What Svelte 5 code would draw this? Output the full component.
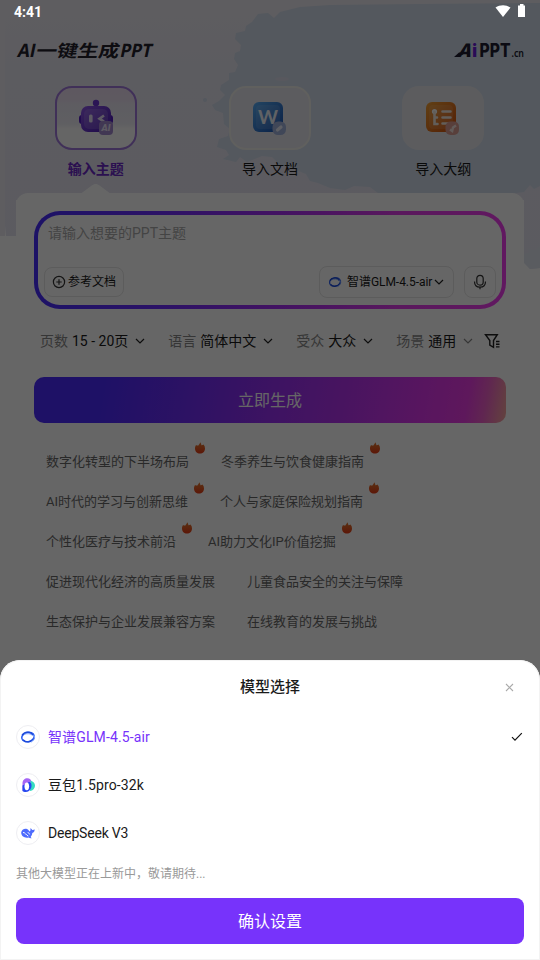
<script>
    const tabs = [
        { id: "topic", label: "输入主题" },
        { id: "doc", label: "导入文档" },
        { id: "outline", label: "导入大纲" },
    ];
    const filters = [
        { name: "页数", value: "15 - 20页" },
        { name: "语言", value: "简体中文" },
        { name: "受众", value: "大众" },
        { name: "场景", value: "通用", faded: true },
    ];
    const topics = [
        [{ text: "数字化转型的下半场布局", hot: true }, { text: "冬季养生与饮食健康指南", hot: true }],
        [{ text: "AI时代的学习与创新思维", hot: true }, { text: "个人与家庭保险规划指南", hot: true }],
        [{ text: "个性化医疗与技术前沿", hot: true }, { text: "AI助力文化IP价值挖掘", hot: true }],
        [{ text: "促进现代化经济的高质量发展" }, { text: "儿童食品安全的关注与保障" }],
        [{ text: "生态保护与企业发展兼容方案" }, { text: "在线教育的发展与挑战" }],
    ];
    const models = [
        { id: "glm", name: "智谱GLM-4.5-air" },
        { id: "doubao", name: "豆包1.5pro-32k" },
        { id: "deepseek", name: "DeepSeek V3" },
    ];
    let activeTab = $state("topic");
    let selected = $state("glm");
    let current = $derived(models.find((m) => m.id === selected));
</script>

{#snippet chevron(faded)}
    <svg class="chevron" class:faded width="10" height="8" viewBox="0 0 10 8">
        <path d="M1 2l4 4 4-4" />
    </svg>
{/snippet}

{#snippet modelIcon(id, size)}
    <svg width={size} height={size} viewBox="0 0 16 16" fill="none">
        {#if id === "glm"}
            <ellipse cx="8" cy="8" rx="6.300" ry="4.700" transform="rotate(-15 8 8)" stroke="#2f62f5" stroke-width="1.500" />
            <path d="M2 6.500C4.500 2.600 10.500 2 12.800 6.200M14.200 9C11.500 13.600 6 14 3 10.800" stroke="#1d49d8" stroke-width="1.400" />
            <path d="M4 5.500C7 4.200 11 4.500 12.700 6.500" stroke="#6f9cff" stroke-width=".8" />
            <path d="M14.400 6.500c.8 3-1 5.500-3.500 6.700" stroke="#7aa2ff" stroke-width="1" />
        {:else if id === "doubao"}
            <path d="M2.500 13.500V6.300C2.500 3.200 4.700 1.200 7.300 1.200c2.500 0 4 1.500 4.200 4L7 6.500 5 14.300z" fill="#a566f5" />
            <path d="M10.600 3.400C13.300 4.400 15 6.300 15 8.700c0 2.600-2.100 4.800-5 5.400z" fill="#35dcc0" />
            <path d="M2.500 8.500v5.500c1.500 1.500 4.700 1.400 6.500 0 2.500-1.900 3.200-5.200 2-7.900-.7-1.300-1.900-1.500-2.700-.7" fill="#2747f0" />
            <ellipse cx="6.800" cy="9.300" rx="2.300" ry="3.900" fill="#fff" />
        {:else}
            <path d="M1.200 7.600C1.500 4.500 4.500 3.200 7 4c1.300.5 1.700 1.400 2.600 2.400 1-.3 1-1.900.7-3.200 1 .3 1.500.9 2 1.700.8.200 1.600-.1 2.300-.6.200 2.200-.8 3.300-2.300 3.700-.2 1.700-.7 2.900-1.700 3.900l1.100 1.300c-1.500.3-2.300-.3-3.100-.6-4.200.9-7.500-1.500-7.400-5z" fill="#4d6bfe" />
            <path d="M3 7.500c2-.3 3.200 2.800 5.300 3.600M7.700 7.600c1 .1 1.700.8 1.900 1.800" stroke="#fff" stroke-width="1" />
        {/if}
    </svg>
{/snippet}

{#snippet tabIcon(id)}
    <svg width="82" height="64" viewBox="0 0 82 64">
        <defs>
            <linearGradient id="g-{id}" x1="0" y1="0" x2="1" y2="1">
                {#if id === "topic"}
                    <stop offset="0" stop-color="#8f57e8" /><stop offset="1" stop-color="#4a1bb5" />
                {:else if id === "doc"}
                    <stop offset="0" stop-color="#58adf5" /><stop offset="1" stop-color="#174fae" />
                {:else}
                    <stop offset="0" stop-color="#f2a035" /><stop offset="1" stop-color="#d34e0c" />
                {/if}
            </linearGradient>
        </defs>
        {#if id === "topic"}
            <rect x="24" y="29" width="34" height="9" rx="3" fill="#561fc4" />
            <path d="M41 17v4" stroke="#6c35d5" stroke-width="2.500" />
            <circle cx="41" cy="17" r="3.200" fill="#6c35d5" />
            <rect x="26" y="20" width="30" height="26" rx="7" fill="url(#g-topic)" />
            <rect x="29" y="23" width="24" height="20" rx="5" fill="#fff" opacity=".13" />
            <rect x="34" y="28.500" width="3.600" height="8" rx="1.500" fill="#e9e2f7" />
            <path d="M49 29.500l-4.500 3.200 4.500 3" fill="none" stroke="#e9e2f7" stroke-width="2.600" />
            <rect x="44" y="35" width="14" height="14" rx="4" fill="#a48bd0" />
            <text x="46.500" y="45.300" class="badge-text" textLength="9" lengthAdjust="spacingAndGlyphs">AI</text>
        {:else if id === "doc"}
            <rect x="24" y="16" width="30" height="30" rx="6" fill="url(#g-doc)" />
            <rect x="27" y="19" width="24" height="24" rx="4" fill="#fff" opacity=".1" />
            <text x="29" y="37.500" class="word" textLength="20" lengthAdjust="spacingAndGlyphs">W</text>
            <rect x="43.500" y="35.500" width="13.500" height="13.500" rx="5.500" fill="#a0b2dc" />
            <path d="M48.500 44l3.500-3" stroke="#e8ecf8" stroke-width="3.200" stroke-linecap="round" />
        {:else}
            <rect x="24" y="16" width="30" height="30" rx="6" fill="url(#g-outline)" />
            <rect x="27" y="19" width="24" height="24" rx="4" fill="#fff" opacity=".1" />
            <circle cx="32.500" cy="25.500" r="2.600" fill="#fff" />
            <path d="M32.500 26v12H35.500M32.500 31.500H35M40.500 25.500h8M40.500 31.500h8M40.500 37.500h8" fill="none" stroke="#f6ece0" stroke-width="2.600" stroke-linecap="round" />
            <rect x="43.500" y="35.500" width="13.500" height="13.500" rx="5" fill="#dc9f95" />
            <path d="M48 43.500l2.200 1.500.8-3.500 3-2" fill="none" stroke="#f6e4de" stroke-width="2.400" />
        {/if}
    </svg>
{/snippet}

<div class="screen">
    <svg class="backdrop" width="540" height="280" viewBox="0 0 540 280">
        <defs>
            <linearGradient id="lav" x1="0" y1="0" x2="0" y2="1">
                <stop offset="0" stop-color="#ebe9f0" />
                <stop offset=".3" stop-color="#e6e5f1" />
                <stop offset="1" stop-color="#e4e3f1" />
            </linearGradient>
        </defs>
        <path d="M0 0H540V268L530 269 524 262V200H16V236H6L4 215 0 218z" fill="url(#lav)" />
        <path d="M0 0H5V236H0z" fill="#eae9f1" />
        <path d="M540 3L420 4 330 5 300 7 280 12 274 18 268 13 258 14 252 22 246 26 245 31 236 33 235 39 241 45 240 51 235 53 234 59 238 65 235 72 229 73 229 80 221 85 220 90 225 95 219 101 212 105 215 110 223 113 224 124 230 129 228 136 219 139 217 147 226 150 229 155 223 159 236 162 240 157 247 162 262 156 272 157 280 165 296 170 306 174 310 181 318 183 330 188 345 190 354 186 370 187 378 193H516L524 192 530 185 534 189 540 186z" fill="#d2dcea" />
        <circle cx="205" cy="100" r="2" fill="#d2dcea" />
        <ellipse cx="282" cy="79" rx="7" ry="2" fill="#dcddec" />
        <path d="M524 254l6-2-2-3 7 1 5-4v22l-10 1-6-6z" fill="#e2e6f0" />
    </svg>

    <main class="page">
        <header>
            <svg width="138" height="22" viewBox="0 0 138 22">
                <g class="title" transform="translate(4 0) skewX(-12)">
                    <text class="wide" x="0.500" y="18" textLength="18" lengthAdjust="spacingAndGlyphs">AI</text>
                    <text x="19" y="18" textLength="83" lengthAdjust="spacingAndGlyphs">一键生成</text>
                    <text class="wide" x="103" y="18" textLength="32" lengthAdjust="spacingAndGlyphs">PPT</text>
                </g>
            </svg>
            <svg width="72" height="22" viewBox="0 0 72 22">
                <path class="swoosh" d="M1 18l5-4.500h5l-1 2.200H7.500L5.500 18z" />
                <text class="logo" transform="translate(5.500 0) skewX(-18)" x="4" y="18" textLength="14" lengthAdjust="spacingAndGlyphs">A</text>
                <text class="logo violet" x="19" y="18">i</text>
                <text class="logo" x="26.500" y="18" textLength="31" lengthAdjust="spacingAndGlyphs">PPT</text>
                <text class="cn" x="58.500" y="18" textLength="12.500" lengthAdjust="spacingAndGlyphs">.cn</text>
            </svg>
        </header>

        <nav>
            {#each tabs as tab}
                <button class="tab" class:active={tab.id === activeTab} onclick={() => (activeTab = tab.id)}>
                    <span class="tile" class:plain={tab.id === "outline"}>{@render tabIcon(tab.id)}</span>
                    <span class="tab-label">{tab.label}</span>
                    <span class="pointer"></span>
                </button>
            {/each}
        </nav>

        <section class="panel">
            <div class="prompt">
                <div class="prompt-inner">
                    <p class="placeholder">请输入想要的PPT主题</p>
                    <div class="tools">
                        <button class="tool ref">
                            <svg width="14" height="14" viewBox="0 0 14 14" class="line">
                                <circle cx="7" cy="7" r="5.600" /><path d="M7 4.300v5.400M4.300 7h5.400" />
                            </svg>
                            <span>参考文档</span>
                        </button>
                        <button class="tool model">
                            {@render modelIcon(selected, 14)}
                            <span>{current.name}</span>
                            {@render chevron(false)}
                        </button>
                        <button class="tool mic" aria-label="mic">
                            <svg width="16" height="16" viewBox="0 0 16 16" class="line">
                                <rect x="4.800" y="1.300" width="6.400" height="9.800" rx="3.200" />
                                <path d="M2.500 7.500c0 3.600 2.400 5.700 5.500 5.700s5.500-2.100 5.500-5.700M8 13.200v2" />
                            </svg>
                        </button>
                    </div>
                </div>
            </div>

            <div class="filters">
                {#each filters as f}
                    <div class="filter">
                        <span class="name">{f.name}</span>
                        <span class="value">{f.value}</span>
                        {@render chevron(f.faded)}
                    </div>
                {/each}
                <svg class="line funnel" width="17" height="16" viewBox="0 0 17 16">
                    <path d="M1.500 1.700h11.800L9.500 7.500v6.800L5.800 12V7.500zM12 8.500h3.500M12 11.200h3.500M12 13.900h3.500" />
                </svg>
            </div>

            <button class="generate">立即生成</button>

            <div class="topics">
                {#each topics as row}
                    <div class="topic-row">
                        {#each row as t}
                            <span class="topic">
                                {t.text}
                                {#if t.hot}
                                    <svg class="fire" width="12" height="12" viewBox="0 0 12 12">
                                        <defs>
                                            <linearGradient id="flame" x1="0" y1="0" x2="0" y2="1">
                                                <stop offset="0" stop-color="#e07a30" /><stop offset="1" stop-color="#e63a14" />
                                            </linearGradient>
                                        </defs>
                                        <path d="M6.200.200C7 1.100 7.400 2.100 7.400 3.200 8.300 3.200 9 2.900 9.500 2.500c1 1.200 1.500 2.500 1.500 3.900C11 9.500 8.900 11.500 6 11.500S1 9.500 1 6.500C1 5.100 1.300 4 2.100 2.900c.6.500 1.300.7 2.300.500C5 2.600 5.900 1.500 6.200.200z" fill="url(#flame)" />
                                    </svg>
                                {/if}
                            </span>
                        {/each}
                    </div>
                {/each}
            </div>
        </section>
    </main>

    <div class="mask"></div>

    <div class="status">
        <span>4:41</span>
        <svg width="32" height="16" viewBox="0 0 32 16" fill="#fff">
            <path d="M.500 4.600C5 1.400 11.200 1.400 15.500 4.600L8 14z" />
            <path d="M25 1h3.500v1.500H30V14H23V2.500h2z" />
        </svg>
    </div>

    <div class="sheet">
        <div class="sheet-head">
            <h2>模型选择</h2>
            <svg class="close" width="9" height="9" viewBox="0 0 9 9"><path d="M1 1l7 7M8 1L1 8" /></svg>
        </div>
        {#each models as m}
            <button class="row" class:chosen={m.id === selected} onclick={() => (selected = m.id)}>
                <span class="avatar">{@render modelIcon(m.id, 16)}</span>
                <span class="model-name" class:latin={m.id === "deepseek"}>{m.name}</span>
                {#if m.id === selected}
                    <svg class="tick" width="14" height="10" viewBox="0 0 14 10"><path d="M2 5.200l3 3L11.800 1.200" /></svg>
                {/if}
            </button>
        {/each}
        <p class="note">其他大模型正在上新中，敬请期待...</p>
        <button class="confirm">确认设置</button>
    </div>
</div>

<style>
    :global(body) {
        margin: 0;
    }
    .screen {
        position: relative;
        width: 540px;
        height: 960px;
        overflow: hidden;
        background: #fff;
        font-family: Roboto, "Noto Sans CJK SC", sans-serif;
        font-size: 14px;
        color: #1a1a1a;
    }
    button {
        font: inherit;
        color: inherit;
        background: none;
        border: none;
        padding: 0;
        margin: 0;
    }
    p, h2 {
        margin: 0;
    }
    svg {
        display: block;
        flex: none;
    }
    .backdrop {
        position: absolute;
        top: 0;
        left: 0;
    }
    .page {
        position: relative;
        padding-top: 39px;
    }
    header {
        display: flex;
        justify-content: space-between;
        padding: 0 15px 0 16px;
        height: 22px;
    }
    .title {
        font-size: 17px;
        font-weight: 700;
        fill: #23212c;
    }
    .wide {
        font-family: "Open Sans", sans-serif;
        font-size: 18.500px;
    }
    .logo {
        font-family: Inter, sans-serif;
        font-size: 18.500px;
        font-weight: 800;
        fill: #201d30;
    }
    .violet {
        fill: #6a20d8;
    }
    .swoosh {
        fill: #201d30;
    }
    .cn {
        font-family: "Noto Sans", sans-serif;
        font-size: 10px;
        font-weight: 600;
        fill: #201d30;
    }
    nav {
        display: grid;
        grid-template-columns: repeat(3, 1fr);
        padding: 25px 10px 0;
        height: 107px;
    }
    .tab {
        display: flex;
        flex-direction: column;
        align-items: center;
    }
    .tile {
        box-sizing: border-box;
        display: flex;
        flex: none;
        align-items: center;
        justify-content: center;
        width: 82px;
        height: 64px;
        border: 2px solid #f0efec;
        border-radius: 17px;
        background: #e6e5ed;
    }
    .tile.plain {
        border-color: #e6e7ea;
        background: #e5e5ea;
    }
    .active .tile {
        border-color: #a078dc;
        background: linear-gradient(#ebdcf0 0, #eadff1 20%, #eae7f3 26%, #eeedf4 60%, #fdfcfd 68%);
    }
    .badge-text {
        font-size: 9px;
        font-weight: 800;
        font-style: italic;
        fill: #e9e2f7;
    }
    .word {
        font-family: Lato, sans-serif;
        font-size: 18px;
        font-weight: 700;
        fill: #f0f4fc;
    }
    .tab:first-child {
        margin-left: -1px;
        margin-right: 1px;
    }
    .tab-label {
        margin-top: 9px;
        height: 20px;
        line-height: 20px;
    }
    .active .tab-label {
        font-weight: 700;
        color: #6c28c8;
    }
    .pointer {
        margin-top: 5px;
        width: 28px;
        height: 9px;
        clip-path: polygon(0 100%, 36% 18%, 46% 0, 54% 0, 64% 18%, 100% 100%);
    }
    .active .pointer {
        background: #fff;
    }
    .panel {
        margin: 0 16px;
        padding: 18px 18px 0;
        height: 500px;
        border-radius: 12px;
        background: #fff;
    }
    .prompt {
        padding: 4px;
        height: 90px;
        border-radius: 26px;
        background: linear-gradient(90deg, #482dff, #6a2dff 25%, #a22ef5 50%, #e13de8 78%, #f23df0);
    }
    .prompt-inner {
        box-sizing: border-box;
        height: 90px;
        padding: 8px 6px 0;
        border-radius: 22px;
        background: #fff;
    }
    .placeholder {
        height: 20px;
        padding-left: 4px;
        line-height: 20px;
        color: #aaa;
    }
    .tools {
        display: flex;
        align-items: center;
        margin-top: 23px;
        height: 32px;
        font-size: 12px;
    }
    .tool {
        box-sizing: border-box;
        display: flex;
        align-items: center;
        height: 32px;
        border: 1px solid #e6e6e6;
        border-radius: 8px;
    }
    .ref {
        width: 80px;
        height: 30px;
        padding-left: 7px;
        gap: 2px;
    }
    .ref span {
        padding-bottom: 3px;
    }
    .model {
        width: 135px;
        margin-left: auto;
        padding-left: 8px;
    }
    .model span {
        margin: 0 2px 0 5px;
        padding-bottom: 4px;
        letter-spacing: -0.05px;
        white-space: nowrap;
    }
    .mic {
        width: 32px;
        margin-left: 10px;
        justify-content: center;
    }
    .line {
        fill: none;
        stroke: #333;
        stroke-width: 1.2;
    }
    .chevron {
        fill: none;
        stroke: #222;
        stroke-width: 1.2;
    }
    .chevron.faded {
        stroke: #888;
    }
    .filters {
        display: flex;
        align-items: center;
        margin-top: 22px;
        padding-left: 6px;
        height: 20px;
        line-height: 20px;
    }
    .filter {
        display: flex;
        align-items: center;
        gap: 4px;
        margin-right: 23px;
        white-space: nowrap;
    }
    .filter .chevron {
        margin-left: 3px;
    }
    .filter:nth-child(4) {
        margin-right: 11px;
    }
    .name {
        color: #888;
    }
    .funnel {
        stroke: #222;
        stroke-width: 1.4;
    }
    .generate {
        display: block;
        width: 472px;
        height: 46px;
        margin-top: 26px;
        padding-bottom: 2px;
        border-radius: 10px;
        background: linear-gradient(100deg, #4b2bff 0, #4b2bff 14%, #6e2dfa 32%, #9830f5 50%, #b634f0 66%, #dc36ee 82%, #eb3ce6 91%, #f05fca 95%, #f7a89a 100%);
        font-size: 16px;
        color: #fff;
    }
    .topics {
        display: grid;
        gap: 8px;
        margin-top: 23px;
    }
    .topic-row {
        display: flex;
        gap: 8px;
    }
    .topic {
        position: relative;
        padding: 0 12px;
        height: 32px;
        line-height: 32px;
        font-size: 13px;
        color: #686868;
        white-space: nowrap;
    }
    .fire {
        position: absolute;
        top: -4px;
        right: -5px;
    }
    .mask {
        position: absolute;
        inset: 0;
        background: rgba(0, 0, 0, 0.6);
    }
    .status {
        position: absolute;
        top: 0;
        left: 0;
        right: 0;
        display: flex;
        align-items: center;
        justify-content: space-between;
        height: 24px;
        padding: 0 13px 0 14px;
        font-weight: 700;
        color: #fff;
    }
    .status svg {
        margin-top: -2px;
    }
    .sheet {
        position: absolute;
        left: 0;
        right: 0;
        bottom: 0;
        box-sizing: border-box;
        height: 300px;
        padding: 0 16px;
        border-radius: 20px 20px 0 0;
        background: #fff;
        box-shadow: inset 0 0 0 1px #f3f3f3;
    }
    .sheet-head {
        display: flex;
        align-items: center;
        height: 53px;
    }
    h2 {
        flex: 1;
        padding: 0 0 2px 19px;
        font-size: 15px;
        font-weight: 500;
        text-align: center;
    }
    .close {
        margin: 2px 10px 0 0;
        fill: none;
        stroke: #aaa;
        stroke-width: 1.1;
    }
    .row {
        display: flex;
        align-items: center;
        width: 100%;
        height: 48px;
        text-align: left;
    }
    .chosen .model-name {
        color: #7733fb;
    }
    .avatar {
        box-sizing: border-box;
        display: flex;
        align-items: center;
        justify-content: center;
        width: 24px;
        height: 24px;
        border: 1px solid #eeeef2;
        border-radius: 50%;
    }
    .model-name {
        flex: 1;
        margin-left: 8px;
        padding-bottom: 2px;
        letter-spacing: 0.12px;
    }
    .model-name.latin {
        padding-bottom: 0;
        letter-spacing: -0.2px;
    }
    .tick {
        fill: none;
        stroke: #111;
        stroke-width: 1.2;
    }
    .note {
        height: 20px;
        margin-top: 7px;
        line-height: 20px;
        font-size: 12px;
        color: #999;
    }
    .confirm {
        width: 508px;
        height: 46px;
        margin-top: 14px;
        padding-bottom: 2px;
        border-radius: 8px;
        background: #7733fb;
        font-size: 16px;
        color: #fff;
    }
</style>
